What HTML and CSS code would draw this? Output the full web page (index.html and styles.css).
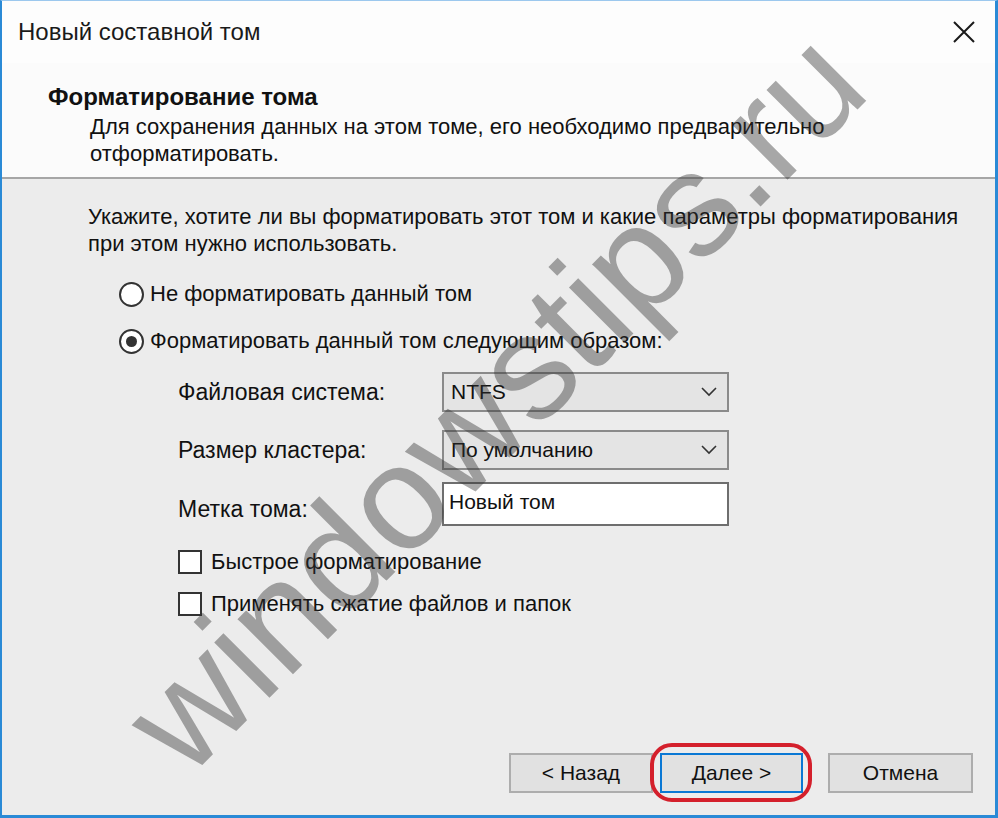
FILE: index.html
```html
<!DOCTYPE html>
<html lang="ru">
<head>
<meta charset="utf-8">
<title>Новый составной том</title>
<link rel="stylesheet" href="styles.css">
</head>
<body>
<div class="window">
  <div class="titlebar">
    <span class="title">Новый составной том</span>
    <svg class="close" width="24" height="24" viewBox="0 0 24 24"><path d="M2 2 L22 22 M22 2 L2 22" stroke="#1a1a1a" stroke-width="2" fill="none"/></svg>
  </div>
  <div class="header">
    <div class="h-title">Форматирование тома</div>
    <div class="h-sub">Для сохранения данных на этом томе, его необходимо предварительно<br>отформатировать.</div>
  </div>
  <div class="content">
    <p class="intro">Укажите, хотите ли вы форматировать этот том и какие параметры форматирования<br>при этом нужно использовать.</p>
    <div class="radios">
      <label class="radio"><span class="rb"></span>Не форматировать данный том</label>
      <label class="radio"><span class="rb checked"></span>Форматировать данный том следующим образом:</label>
    </div>
    <div class="options">
      <div class="grid">
        <span class="lbl">Файловая система:</span>
        <div class="select"><span>NTFS</span><svg width="16" height="10" viewBox="0 0 16 10"><path d="M1 1 L8 8 L15 1" stroke="#333" stroke-width="1.6" fill="none"/></svg></div>
        <span class="lbl">Размер кластера:</span>
        <div class="select"><span>По умолчанию</span><svg width="16" height="10" viewBox="0 0 16 10"><path d="M1 1 L8 8 L15 1" stroke="#333" stroke-width="1.6" fill="none"/></svg></div>
        <span class="lbl lbl-last">Метка тома:</span>
        <div class="input">Новый том</div>
      </div>
      <div class="checks">
        <label class="check"><span class="cb"></span>Быстрое форматирование</label>
        <label class="check"><span class="cb"></span>Применять сжатие файлов и папок</label>
      </div>
    </div>
    <div class="footer">
      <button class="btn">&lt; Назад</button>
      <button class="btn primary">Далее &gt;<span class="ring"></span></button>
      <button class="btn cancel">Отмена</button>
    </div>
  </div>
  <div class="watermark">windowstips.ru</div>
</div>
</body>
</html>
```
FILE: styles.css
```css
* { box-sizing: border-box; }
html, body { margin: 0; padding: 0; }
body {
  width: 998px;
  height: 818px;
  overflow: hidden;
  font-family: "Liberation Sans", Arial, sans-serif;
  color: #111;
  background: #fff;
}
.window {
  position: relative;
  width: 998px;
  height: 818px;
  border-left: 2px solid #2a8ad6;
  border-right: 3px solid #2a8ad6;
  border-bottom: 3px solid #2a8ad6;
  border-top: 1px solid #9cc8ee;
  display: flex;
  flex-direction: column;
  overflow: hidden;
}
.titlebar {
  height: 62px;
  background: #fdfdfd;
  display: flex;
  align-items: center;
  justify-content: space-between;
  padding: 0 19px 0 16px;
}
.title {
  font-size: 24px;
  color: #1a1a1a;
}
.header {
  height: 116px;
  background: #fbfbfb;
  border-bottom: 2px solid #a6a6a6;
  padding: 20px 0 0 46px;
}
.h-title {
  font-weight: bold;
  font-size: 24px;
  line-height: 28px;
}
.h-sub {
  font-size: 22px;
  line-height: 27px;
  padding-left: 42px;
  margin-top: 2px;
}
.content {
  flex: 1;
  background: #ececec;
  display: flex;
  flex-direction: column;
  padding: 24px 22px 22px 86px;
}
.intro {
  margin: 0;
  font-size: 22px;
  line-height: 27px;
}
.radios {
  margin: 22px 0 0 31px;
  display: flex;
  flex-direction: column;
  gap: 17px;
}
.radio {
  display: flex;
  align-items: center;
  height: 30px;
  font-size: 22px;
  gap: 6px;
}
.rb {
  width: 25px;
  height: 25px;
  border: 2px solid #333;
  border-radius: 50%;
  background: #fff;
  display: flex;
  align-items: center;
  justify-content: center;
}
.rb.checked::after {
  content: "";
  width: 11px;
  height: 11px;
  border-radius: 50%;
  background: #333;
}
.options {
  margin: 16px 0 0 90px;
}
.grid {
  display: grid;
  grid-template-columns: 264px 287px;
  grid-template-rows: 40px 40px 44px;
  row-gap: 18px;
  align-items: center;
}
.grid .input { align-self: start; margin-top: -6px; }
.grid .lbl-last { align-self: start; margin-top: 8px; }
.lbl { font-size: 23px; }
.select {
  height: 40px;
  background: #e4e4e4;
  border: 2px solid #8a8a8a;
  display: flex;
  align-items: center;
  justify-content: space-between;
  padding: 0 10px 0 7px;
  font-size: 21px;
}
.input {
  height: 44px;
  background: #fff;
  border: 2px solid #6e6e6e;
  display: flex;
  align-items: center;
  padding: 0 5px 4px;
  font-size: 21px;
}
.checks {
  margin-top: 15px;
  display: flex;
  flex-direction: column;
  gap: 12px;
}
.check {
  display: flex;
  align-items: center;
  height: 30px;
  gap: 9px;
  font-size: 22px;
}
.cb {
  width: 24px;
  height: 24px;
  border: 2px solid #333;
  background: #fff;
}
.footer {
  margin-top: auto;
  display: flex;
  justify-content: flex-end;
  gap: 7px;
}
.btn {
  position: relative;
  height: 40px;
  width: 144px;
  background: #e1e1e1;
  border: 2px solid #adadad;
  font-family: "Liberation Sans", Arial, sans-serif;
  font-size: 21px;
  color: #111;
  padding: 0;
}
.btn.primary {
  width: 143px;
  border-color: #0a78d4;
}
.btn.cancel {
  width: 145px;
  margin-left: 18px;
}
.ring {
  position: absolute;
  left: -12px;
  top: -12px;
  right: -11px;
  bottom: -11px;
  border: 4px solid #d4202c;
  border-radius: 22px;
  pointer-events: none;
}
.watermark {
  position: absolute;
  left: 492px;
  top: 400px;
  transform: translate(-50%, -50%) rotate(-45deg);
  font-size: 148px;
  color: rgba(50, 50, 50, 0.42);
  white-space: nowrap;
  pointer-events: none;
  font-family: "Liberation Sans", Arial, sans-serif;
}
```
